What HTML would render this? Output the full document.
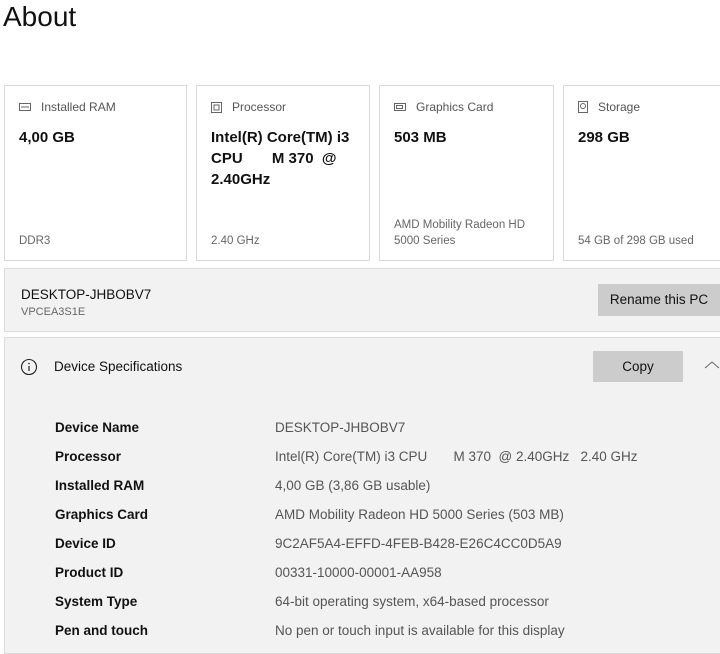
<!DOCTYPE html>
<html><head><meta charset="utf-8"><style>
*{margin:0;padding:0;box-sizing:border-box}
body{width:720px;height:636px;overflow:hidden;background:#fff;font-family:"Liberation Sans",sans-serif;color:#000;position:relative}
.abs{position:absolute;white-space:nowrap}
.card{position:absolute;top:85px;height:176px;border:1px solid #d9d9d9;background:#fff}
.card .h{position:absolute;left:14px;top:14px;font-size:12px;color:#555;display:flex;align-items:center;white-space:nowrap}
.card .h svg{margin-right:10px}
.card .v{position:absolute;left:14px;top:41px;font-size:15px;font-weight:bold;line-height:21px;color:#111;white-space:nowrap}
.card .f{position:absolute;left:14px;bottom:11px;font-size:11.5px;color:#666;line-height:16px;white-space:nowrap}
.sec{position:absolute;left:4px;right:0;background:#f2f2f2;border:1px solid #dcdcdc;border-right:none}
.btn{position:absolute;background:#ccc;font-size:13.5px;color:#111;text-align:center;white-space:nowrap}
.row{position:absolute;left:0;right:0;font-size:13.5px;white-space:nowrap}
.row b{position:absolute;left:55px;color:#111}
.row span{position:absolute;left:275px;color:#555;white-space:pre}
</style></head><body>
<div class="abs" style="left:3px;top:1px;font-size:28px;color:#111">About</div>

<div class="card" style="left:4px;width:183px"><div class="h"><svg width="12" height="8" viewBox="0 0 12 8"><rect x=".5" y=".5" width="11" height="7" fill="none" stroke="#666"/><path d="M3 3v2M5 3v2M7 3v2M9 3v2" stroke="#666"/></svg>Installed RAM</div><div class="v">4,00 GB</div><div class="f">DDR3</div></div>
<div class="card" style="left:196px;width:174px"><div class="h"><svg width="11" height="11" viewBox="0 0 11 11"><rect x=".5" y=".5" width="10" height="10" fill="none" stroke="#666"/><rect x="3" y="3" width="5" height="5" fill="none" stroke="#666"/></svg>Processor</div><div class="v">Intel(R) Core(TM) i3<br>CPU&nbsp;&nbsp;&nbsp;&nbsp;&nbsp;&nbsp; M 370&nbsp; @<br>2.40GHz</div><div class="f">2.40 GHz</div></div>
<div class="card" style="left:379px;width:175px"><div class="h"><svg width="12" height="10" viewBox="0 0 12 10"><rect x=".5" y="1.5" width="11" height="7" fill="none" stroke="#666"/><rect x="2.5" y="3.5" width="6" height="3" fill="none" stroke="#666"/></svg>Graphics Card</div><div class="v">503 MB</div><div class="f">AMD Mobility Radeon HD<br>5000 Series</div></div>
<div class="card" style="left:563px;width:170px"><div class="h"><svg width="10" height="12" viewBox="0 0 10 12"><rect x=".5" y=".5" width="9" height="11" fill="none" stroke="#666"/><circle cx="5" cy="5" r="2.5" fill="none" stroke="#666"/></svg>Storage</div><div class="v">298 GB</div><div class="f">54 GB of 298 GB used</div></div>

<div class="sec" style="top:268px;height:64px">
<div class="abs" style="left:16px;top:18px;font-size:13.5px;color:#111">DESKTOP-JHBOBV7</div>
<div class="abs" style="left:16px;top:37px;font-size:11px;color:#666">VPCEA3S1E</div>
</div>
<div class="btn" style="left:598px;top:284px;width:122px;height:32px;line-height:32px">Rename this PC</div>

<div class="sec" style="top:337px;height:58px">
<svg class="abs" style="left:15px;top:20px" width="18" height="18" viewBox="0 0 18 18"><circle cx="9" cy="9" r="7.5" fill="none" stroke="#222" stroke-width="1.1"/><path d="M9 8v5" stroke="#222" stroke-width="1.2"/><circle cx="9" cy="5.5" r=".8" fill="#222"/></svg>
<div class="abs" style="left:49px;top:21px;font-size:13.5px;color:#111">Device Specifications</div>
<svg class="abs" style="left:699px;top:22px" width="16" height="10" viewBox="0 0 16 10"><path d="M1 8l7-6 7 6" fill="none" stroke="#666"/></svg>
</div>
<div class="btn" style="left:593px;top:351px;width:90px;height:31px;line-height:31px">Copy</div>
<div class="sec" style="top:394px;height:260px;border-top:none"></div>

<div class="row" style="top:420px"><b>Device Name</b><span>DESKTOP-JHBOBV7</span></div>
<div class="row" style="top:449px"><b>Processor</b><span>Intel(R) Core(TM) i3 CPU       M 370  @ 2.40GHz   2.40 GHz</span></div>
<div class="row" style="top:478px"><b>Installed RAM</b><span>4,00 GB (3,86 GB usable)</span></div>
<div class="row" style="top:507px"><b>Graphics Card</b><span>AMD Mobility Radeon HD 5000 Series (503 MB)</span></div>
<div class="row" style="top:536px"><b>Device ID</b><span>9C2AF5A4-EFFD-4FEB-B428-E26C4CC0D5A9</span></div>
<div class="row" style="top:565px"><b>Product ID</b><span>00331-10000-00001-AA958</span></div>
<div class="row" style="top:594px"><b>System Type</b><span>64-bit operating system, x64-based processor</span></div>
<div class="row" style="top:623px"><b>Pen and touch</b><span>No pen or touch input is available for this display</span></div>
</body></html>
